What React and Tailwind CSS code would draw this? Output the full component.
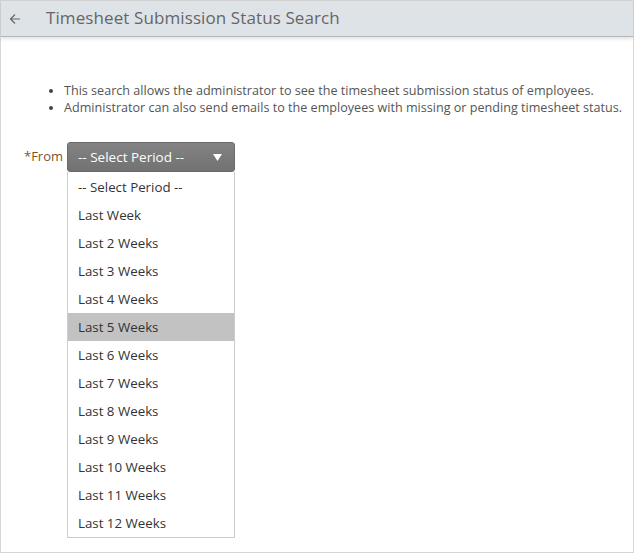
const PERIODS = [
  "-- Select Period --",
  "Last Week",
  "Last 2 Weeks",
  "Last 3 Weeks",
  "Last 4 Weeks",
  "Last 5 Weeks",
  "Last 6 Weeks",
  "Last 7 Weeks",
  "Last 8 Weeks",
  "Last 9 Weeks",
  "Last 10 Weeks",
  "Last 11 Weeks",
  "Last 12 Weeks",
];

export default function App() {
  const selected = "Last 5 Weeks";

  return (
    <div className="w-[634px] h-[554px] bg-white font-['Open_Sans',sans-serif] text-[#333]">
      <div className="h-[553px] border-l border-r border-b border-[#d6d6d6] flex flex-col">
        {/* Header bar */}
        <div className="h-[37px] shrink-0 bg-[#dee3e7] border-t border-[#d0d0d0] border-b border-b-[#b5b5b5] shadow-[0_2px_4px_rgba(0,0,0,0.12)] flex items-center">
          <svg className="ml-[8px] w-[12px] h-[12px]" viewBox="0 0 12 12" fill="none" stroke="#666" strokeWidth="1.2">
            <path d="M11 6H1.5M6 1.5L1.5 6L6 10.5" />
          </svg>
          <div className="ml-[25px] -mt-[2px] text-[17px] text-[#666] tracking-[0.1px]">Timesheet Submission Status Search</div>
        </div>

        {/* Info bullets */}
        <ul className="mt-[45px] ml-[63px] list-disc text-[12.6px] leading-[17px] text-[#555] marker:text-[#444]">
          <li>This search allows the administrator to see the timesheet submission status of employees.</li>
          <li>Administrator can also send emails to the employees with missing or pending timesheet status.</li>
        </ul>

        {/* Period select */}
        <div className="mt-[26px] flex items-start">
          <div className="ml-[23px] w-[43px] h-[30px] flex items-center text-[13px] text-[#7d5230]">*From</div>
          <div className="w-[168px]">
            <div className="h-[30px] rounded-[3px] bg-gradient-to-b from-[#838383] to-[#727272] border border-[#6a6a6a] flex items-center justify-between pl-[10px] pr-[12px] text-white text-[13.5px]">
              <span>-- Select Period --</span>
              <svg className="w-[9px] h-[7px]" viewBox="0 0 9 7" fill="#fff">
                <path d="M0 0H9L4.5 7Z" />
              </svg>
            </div>
            <div className="border border-t-0 border-[#cccccc] bg-white pt-[1px]">
              {PERIODS.map((p) => (
                <div
                  key={p}
                  className={`h-[28px] flex items-center pl-[10px] pt-[2px] text-[13.3px] text-[#333] ${p === selected ? "bg-[#c2c2c2]" : ""}`}
                >
                  {p}
                </div>
              ))}
            </div>
          </div>
        </div>
      </div>
    </div>
  );
}
